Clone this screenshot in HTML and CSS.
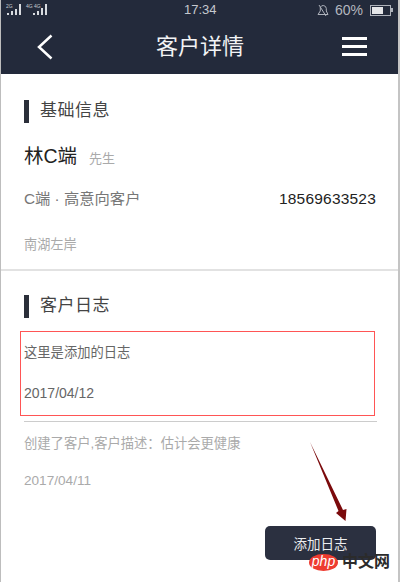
FILE: index.html
```html
<!DOCTYPE html>
<html lang="zh">
<head>
<meta charset="utf-8">
<title>客户详情</title>
<link rel="stylesheet" href="styles.css">
</head>
<body>
<div class="page">
  <header class="top">
    <div class="status">
      <div class="signal">
        <svg width="44" height="12" viewBox="0 0 44 12">
          <g fill="#d8dbe0">
            <rect x="2" y="9" width="2" height="2"/><rect x="6" y="7" width="2" height="4"/><rect x="10" y="5" width="2" height="6"/><rect x="14" y="0" width="2" height="11"/>
            <rect x="28" y="9" width="2" height="2"/><rect x="32" y="7" width="2" height="4"/><rect x="36" y="4" width="2" height="7"/><rect x="40" y="0" width="2" height="11"/>
          </g>
        </svg>
        <span class="net n1">2G</span><span class="net n2">4G 4G</span>
      </div>
      <span class="clock">17:34</span>
      <div class="status-right">
        <svg class="bell" width="12" height="12" viewBox="0 0 12 12" fill="none" stroke="#aeb2bb" stroke-width="1">
          <path d="M1 10.500h10L9.300 7V4.500a3.200 3.200 0 0 0-6-1.300V7z"/><path d="M2 1l7 11"/>
        </svg>
        <span class="pct">60%</span>
        <div class="battery"><div class="level"></div></div><div class="nub"></div>
      </div>
    </div>
    <div class="navbar">
      <svg class="back" width="16" height="26" viewBox="0 0 16 26" fill="none" stroke="#fff" stroke-width="2.500">
        <path d="M14.500 1.500L2 13l12.500 11.500"/>
      </svg>
      <h1 class="title">客户详情</h1>
      <div class="menu"><i></i><i></i><i></i></div>
    </div>
  </header>

  <section class="info">
    <h2 class="heading">基础信息</h2>
    <div class="name-row"><span class="name">林C端</span><span class="gender">先生</span></div>
    <div class="type-row"><span>C端 · 高意向客户</span><span class="phone">18569633523</span></div>
    <div class="address">南湖左岸</div>
  </section>

  <section class="log">
    <h2 class="heading">客户日志</h2>
    <div class="entry marked">
      <p class="entry-text">这里是添加的日志</p>
      <p class="entry-date">2017/04/12</p>
    </div>
    <div class="entry plain">
      <p class="entry-text">创建了客户,客户描述：估计会更健康</p>
      <p class="entry-date">2017/04/11</p>
    </div>
    <div class="actions"><button class="add">添加日志</button></div>
  </section>

  <svg class="arrow" width="40" height="82" viewBox="0 0 40 82">
    <path d="M1 1L29.500 70L27 72L36.500 80L37.500 68L34 69Z" fill="#7b0a0c"/>
  </svg>
  <div class="watermark"><span class="php">php</span><span class="cn">中文网</span></div>
</div>
</body>
</html>
```
FILE: styles.css
```css
* { box-sizing: border-box; }
html, body { margin: 0; padding: 0; }
body { font-family: "Liberation Sans", "Noto Sans CJK SC", sans-serif; background: #fff; }
.page { position: relative; width: 400px; height: 582px; overflow: hidden; background: #fff; border-left: 1px solid #bdbdbd; border-right: 2px solid #c4c4c4; }

.top { background: #232a3b; height: 74px; }
.status { position: relative; height: 20px; display: flex; align-items: center; justify-content: space-between; padding: 0 5px 0 4px; }
.signal { position: relative; width: 44px; height: 12px; }
.signal svg { display: block; }
.net { position: absolute; top: -1px; font-size: 5px; line-height: 6px; color: #c8ccd2; }
.n1 { left: 1px; }
.n2 { left: 21px; }
.clock { position: absolute; left: 183px; top: 2px; font-size: 13px; line-height: 16px; color: #c5c8ce; }
.status-right { display: flex; align-items: center; color: #b4b7bf; font-size: 14px; }
.bell { margin-right: 6px; }
.pct { margin-right: 7px; line-height: 16px; }
.battery { width: 21px; height: 11px; border: 1px solid #aeb2bb; padding: 1px; }
.level { width: 11px; height: 7px; background: #e4e5e8; }
.nub { width: 2px; height: 4px; background: #aeb2bb; }

.navbar { display: flex; align-items: center; height: 54px; padding: 0 31px 0 36px; justify-content: space-between; position: relative; }
.back { display: block; margin-top: -1px; }
.title { position: absolute; left: 155px; top: 12px; margin: 0; font-size: 22px; line-height: 30px; font-weight: 400; color: #f2f3f5; }
.menu { display: flex; flex-direction: column; gap: 5px; margin-top: -1px; }
.menu i { display: block; width: 25px; height: 3px; background: #fff; }

.info { height: 197px; padding: 26px 22px 0 23px; border-bottom: 2px solid #e2e2e2; }
.heading { margin: 0; height: 23px; padding-left: 11px; border-left: 5px solid #2b2f3a; font-size: 17px; line-height: 22px; font-weight: 400; color: #444; letter-spacing: 0.5px; }
.name-row { display: flex; align-items: baseline; margin-top: 20px; }
.name { font-size: 19.500px; line-height: 26px; color: #222; }
.gender { margin-left: 12px; font-size: 13px; color: #aaa; }
.type-row { display: flex; justify-content: space-between; align-items: center; margin-top: 20px; font-size: 15.300px; line-height: 20px; color: #777; }
.phone { font-size: 15.500px; color: #222; letter-spacing: 0.2px; }
.address { margin-top: 28px; font-size: 13.200px; line-height: 16px; color: #aaa; }

.log { padding: 24px 0 0 23px; }
.entry { margin: 0; }
.entry p { margin: 0; font-size: 13.300px; line-height: 16px; }
.marked { width: 355px; height: 85px; margin: 13px 0 0 -4px; padding: 13px 0 0 3px; border: 1px solid #f55; color: #666; }
.marked .entry-date { margin-top: 24px; font-size: 14px; }
.plain { width: 353px; margin-top: 5px; padding-top: 14px; border-top: 1px solid #ccc; color: #aaa; }
.plain .entry-date { margin-top: 21px; font-size: 13.600px; }
.actions { display: flex; justify-content: flex-end; padding-right: 22px; margin-top: 37px; }
.add { width: 111px; height: 34px; border: 0; border-radius: 5px; background: #2b3040; color: #eceef0; font-family: inherit; font-size: 13.500px; padding: 0; }

.arrow { position: absolute; left: 308px; top: 441px; }
.watermark { position: absolute; left: 308px; top: 553px; display: flex; align-items: center; gap: 4px; }
.php { width: 29px; height: 17px; border-radius: 50%; background: #ee3b30; color: #fff; font-size: 14px; line-height: 15px; text-align: center; font-style: italic; }
.cn { font-size: 16px; line-height: 18px; font-weight: 700; color: #2b2b2b; }
```
